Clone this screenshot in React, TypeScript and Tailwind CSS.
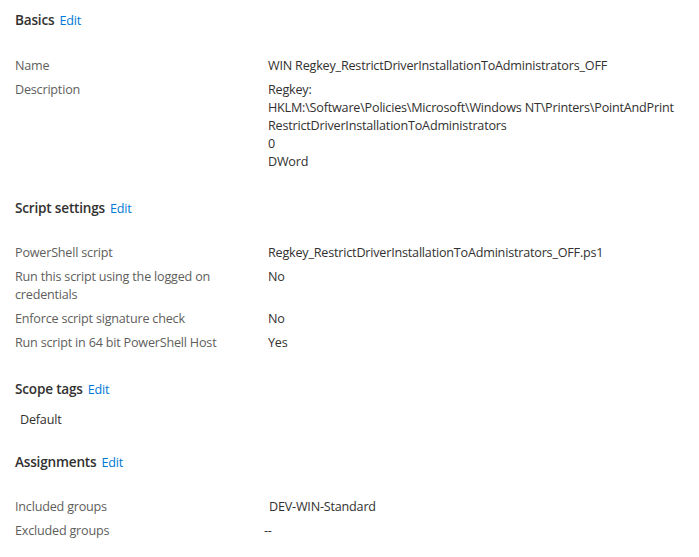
import React from 'react';

type Row = { label: string; value: React.ReactNode };

const basics: Row[] = [
  { label: 'Name', value: 'WIN Regkey_RestrictDriverInstallationToAdministrators_OFF' },
  {
    label: 'Description',
    value: (
      <>
        <div>Regkey:</div>
        <div>HKLM:\Software\Policies\Microsoft\Windows NT\Printers\PointAndPrint</div>
        <div>RestrictDriverInstallationToAdministrators</div>
        <div>0</div>
        <div>DWord</div>
      </>
    ),
  },
];

const scriptSettings: Row[] = [
  { label: 'PowerShell script', value: 'Regkey_RestrictDriverInstallationToAdministrators_OFF.ps1' },
  { label: 'Run this script using the logged on credentials', value: 'No' },
  { label: 'Enforce script signature check', value: 'No' },
  { label: 'Run script in 64 bit PowerShell Host', value: 'Yes' },
];

const assignments: Row[] = [
  { label: 'Included groups', value: <span className="pl-[1px]">DEV-WIN-Standard</span> },
  { label: 'Excluded groups', value: <span className="-ml-[4px]">--</span> },
];

function SectionHeader({ title }: { title: string }) {
  return (
    <div className="flex h-[20px] items-baseline gap-[5px] leading-[20px]">
      <h2 className="text-[13.6px] font-semibold text-[#323130]">{title}</h2>
      <a href="#" className="text-[12.6px] text-[#0078d4] hover:underline">Edit</a>
    </div>
  );
}

function PropertyList({ rows }: { rows: Row[] }) {
  return (
    <div className="flex flex-col gap-[6px]">
      {rows.map((row) => (
        <div key={row.label} className="flex text-[12.6px] leading-[18px]">
          <div className="w-[253px] shrink-0 pr-[30px] text-[#605e5c]">{row.label}</div>
          <div className="text-[#323130] whitespace-nowrap">{row.value}</div>
        </div>
      ))}
    </div>
  );
}

export default function App() {
  return (
    <div
      className="w-[699px] h-[557px] overflow-hidden bg-white pl-[15px] pt-[10px] tracking-[-0.2px]"
      style={{ fontFamily: '"Segoe UI", "Open Sans", "Noto Sans", sans-serif' }}
    >
      {/* Basics */}
      <section>
        <SectionHeader title="Basics" />
        <div className="mt-[27px]">
          <PropertyList rows={basics} />
        </div>
      </section>

      {/* Script settings */}
      <section className="mt-[27px]">
        <SectionHeader title="Script settings" />
        <div className="mt-[26px]">
          <PropertyList rows={scriptSettings} />
        </div>
      </section>

      {/* Scope tags */}
      <section className="mt-[27px]">
        <SectionHeader title="Scope tags" />
        <div className="mt-[12px] pl-[5px] text-[12.6px] leading-[18px] text-[#323130]">Default</div>
      </section>

      {/* Assignments */}
      <section className="mt-[23px]">
        <SectionHeader title="Assignments" />
        <div className="mt-[26px]">
          <PropertyList rows={assignments} />
        </div>
      </section>
    </div>
  );
}
